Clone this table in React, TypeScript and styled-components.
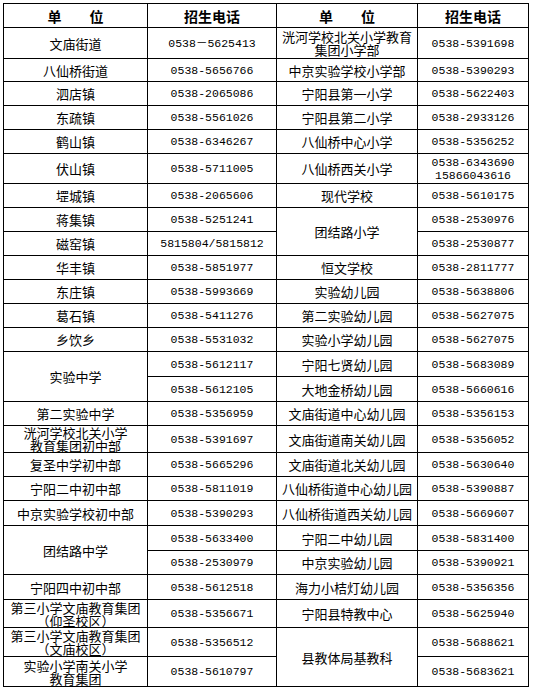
import React from 'react'
import styled, { createGlobalStyle } from 'styled-components'

const GlobalStyle = createGlobalStyle`
  html, body {
    margin: 0;
    padding: 0;
    background: #fff;
  }
`

const Page = styled.div`
  padding: 3px 0 0 3px;
`

const Table = styled.table`
  border-collapse: collapse;
  table-layout: fixed;
  width: 526px;
  color: #000;
  font-family: "Noto Sans CJK SC", "Liberation Sans", sans-serif;
`

const Row = styled.tr<{ $h: number }>`
  height: ${p => p.$h}px;
`

const Cell = styled.td`
  border: 1px solid #000;
  padding: 0;
  text-align: center;
  vertical-align: middle;
  white-space: nowrap;
`

const HeadCell = styled(Cell).attrs({ as: 'th' })`
  font-size: 14px;
  font-weight: 700;
  line-height: 16px;
`

const NameCell = styled(Cell)`
  font-size: 13px;
  line-height: 13px;
`

const PhoneCell = styled(Cell)`
  font-family: "Liberation Mono", "Noto Sans CJK SC", monospace;
  font-size: 11.5px;
  line-height: 13px;
`

interface Side {
  name?: string
  span?: number
  phone: string
}

interface RowData {
  h: number
  left: Side
  right: Side
}

const rows: RowData[] = [
  { h: 31, left: { name: '文庙街道', phone: '0538－5625413' }, right: { name: '洸河学校北关小学教育\n集团小学部', phone: '0538-5391698' } },
  { h: 23, left: { name: '八仙桥街道', phone: '0538-5656766' }, right: { name: '中京实验学校小学部', phone: '0538-5390293' } },
  { h: 24, left: { name: '泗店镇', phone: '0538-2065086' }, right: { name: '宁阳县第一小学', phone: '0538-5622403' } },
  { h: 24, left: { name: '东疏镇', phone: '0538-5561026' }, right: { name: '宁阳县第二小学', phone: '0538-2933126' } },
  { h: 24, left: { name: '鹤山镇', phone: '0538-6346267' }, right: { name: '八仙桥中心小学', phone: '0538-5356252' } },
  { h: 30, left: { name: '伏山镇', phone: '0538-5711005' }, right: { name: '八仙桥西关小学', phone: '0538-6343690\n15866043616' } },
  { h: 24, left: { name: '堽城镇', phone: '0538-2065606' }, right: { name: '现代学校', phone: '0538-5610175' } },
  { h: 24, left: { name: '蒋集镇', phone: '0538-5251241' }, right: { name: '团结路小学', span: 2, phone: '0538-2530976' } },
  { h: 24, left: { name: '磁窑镇', phone: '5815804/5815812' }, right: { phone: '0538-2530877' } },
  { h: 24, left: { name: '华丰镇', phone: '0538-5851977' }, right: { name: '恒文学校', phone: '0538-2811777' } },
  { h: 24, left: { name: '东庄镇', phone: '0538-5993669' }, right: { name: '实验幼儿园', phone: '0538-5638806' } },
  { h: 24, left: { name: '葛石镇', phone: '0538-5411276' }, right: { name: '第二实验幼儿园', phone: '0538-5627075' } },
  { h: 24, left: { name: '乡饮乡', phone: '0538-5531032' }, right: { name: '实验小学幼儿园', phone: '0538-5627075' } },
  { h: 25, left: { name: '实验中学', span: 2, phone: '0538-5612117' }, right: { name: '宁阳七贤幼儿园', phone: '0538-5683089' } },
  { h: 25, left: { phone: '0538-5612105' }, right: { name: '大地金桥幼儿园', phone: '0538-5660616' } },
  { h: 24, left: { name: '第二实验中学', phone: '0538-5356959' }, right: { name: '文庙街道中心幼儿园', phone: '0538-5356153' } },
  { h: 27, left: { name: '洸河学校北关小学\n教育集团初中部', phone: '0538-5391697' }, right: { name: '文庙街道南关幼儿园', phone: '0538-5356052' } },
  { h: 24, left: { name: '复圣中学初中部', phone: '0538-5665296' }, right: { name: '文庙街道北关幼儿园', phone: '0538-5630640' } },
  { h: 24, left: { name: '宁阳二中初中部', phone: '0538-5811019' }, right: { name: '八仙桥街道中心幼儿园', phone: '0538-5390887' } },
  { h: 25, left: { name: '中京实验学校初中部', phone: '0538-5390293' }, right: { name: '八仙桥街道西关幼儿园', phone: '0538-5669607' } },
  { h: 25, left: { name: '团结路中学', span: 2, phone: '0538-5633400' }, right: { name: '宁阳二中幼儿园', phone: '0538-5831400' } },
  { h: 24, left: { phone: '0538-2530979' }, right: { name: '中京实验幼儿园', phone: '0538-5390921' } },
  { h: 25, left: { name: '宁阳四中初中部', phone: '0538-5612518' }, right: { name: '海力小桔灯幼儿园', phone: '0538-5356356' } },
  { h: 28, left: { name: '第三小学文庙教育集团\n（仰圣校区）', phone: '0538-5356671' }, right: { name: '宁阳县特教中心', phone: '0538-5625940' } },
  { h: 29, left: { name: '第三小学文庙教育集团\n（文庙校区）', phone: '0538-5356512' }, right: { name: '县教体局基教科', span: 2, phone: '0538-5688621' } },
  { h: 30, left: { name: '实验小学南关小学\n教育集团', phone: '0538-5610797' }, right: { phone: '0538-5683621' } },
]

const Lines = ({ text }: { text: string }) => (
  <>
    {text.split('\n').map((line, i) => (
      <div key={i}>{line}</div>
    ))}
  </>
)

const SideCells = ({ side }: { side: Side }) => (
  <>
    {side.name !== undefined && (
      <NameCell rowSpan={side.span || 1}>
        <Lines text={side.name} />
      </NameCell>
    )}
    <PhoneCell>
      <Lines text={side.phone} />
    </PhoneCell>
  </>
)

const App: React.FC = (): JSX.Element => {
  return (
    <Page>
      <GlobalStyle />
      <Table>
        <colgroup>
          <col style={{ width: 144 }} />
          <col style={{ width: 129 }} />
          <col style={{ width: 141 }} />
          <col style={{ width: 111 }} />
        </colgroup>
        <thead>
          <Row $h={24}>
            <HeadCell>单　　位</HeadCell>
            <HeadCell>招生电话</HeadCell>
            <HeadCell>单　　位</HeadCell>
            <HeadCell>招生电话</HeadCell>
          </Row>
        </thead>
        <tbody>
          {rows.map((r, i) => (
            <Row $h={r.h} key={i}>
              <SideCells side={r.left} />
              <SideCells side={r.right} />
            </Row>
          ))}
        </tbody>
      </Table>
    </Page>
  )
}

export default App
